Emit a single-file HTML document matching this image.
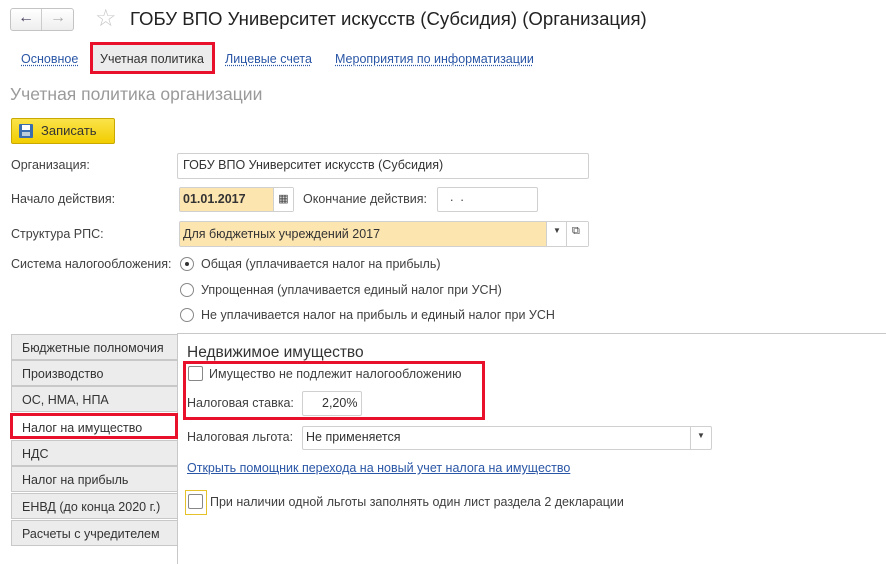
<!DOCTYPE html>
<html><head><meta charset="utf-8"><style>
*{box-sizing:border-box;margin:0;padding:0}
body{width:886px;height:564px;background:#fff;font-family:"Liberation Sans",Arial,sans-serif;font-size:12.5px;color:#404040;position:relative;overflow:hidden}
.a{position:absolute;white-space:nowrap}
.inp{position:absolute;border:1px solid #d0d0d0;border-radius:2px;background:#fff}
.lnk{color:#2a56a6;text-decoration:underline dotted;text-underline-offset:2px}
.tab{position:absolute;left:11px;width:166px;height:26px;background:#ececec;border:1px solid #c8c8c8;border-right:none;padding:6px 0 0 10px;color:#333}
.rad{position:absolute;width:14px;height:14px;border:1px solid #888;border-radius:50%;background:#fff}
</style></head><body>
<div class="a" style="left:10px;top:8px;width:64px;height:23px;border:1px solid #c4c4c4;border-radius:3px;background:linear-gradient(#fff,#eee)"></div>
<div class="a" style="left:41px;top:9px;width:1px;height:21px;background:#ccc"></div>
<div class="a" style="left:18px;top:9px;font-size:16px;color:#4a4060;font-weight:bold">&#8592;</div>
<div class="a" style="left:50px;top:9px;font-size:16px;color:#aaa;font-weight:bold">&#8594;</div>
<div class="a" style="left:95px;top:4px;font-size:24px;color:#c8c8c8">&#9734;</div>
<div class="a" style="left:130px;top:8px;font-size:18.6px;color:#222">ГОБУ ВПО Университет искусств (Субсидия) (Организация)</div>

<div class="a lnk" style="left:21px;top:52px">Основное</div>
<div class="a" style="left:90px;top:42px;width:125px;height:32px;border:3px solid #e8102a;background:#ececec"></div>
<div class="a" style="left:100px;top:52px;color:#333">Учетная политика</div>
<div class="a lnk" style="left:225px;top:52px">Лицевые счета</div>
<div class="a lnk" style="left:335px;top:52px">Мероприятия по информатизации</div>

<div class="a" style="left:10px;top:84px;font-size:17.5px;color:#9a9a9a">Учетная политика организации</div>

<div class="a" style="left:11px;top:118px;width:104px;height:26px;border:1px solid #c9a800;border-radius:2px;background:linear-gradient(#fbe34a,#f1cd00)"></div>
<div class="a" style="left:19px;top:124px;width:14px;height:14px;background:#3a6db0;border-radius:1px"><div style="margin:1px 3px;width:8px;height:5px;background:#fff"></div><div style="margin:2px 3px;width:8px;height:4px;background:#bcd"></div></div>
<div class="a" style="left:41px;top:123px;color:#333;font-size:13px">Записать</div>

<div class="a" style="left:11px;top:158px">Организация:</div>
<div class="inp" style="left:177px;top:153px;width:412px;height:26px"></div>
<div class="a" style="left:183px;top:158px;color:#333">ГОБУ ВПО Университет искусств (Субсидия)</div>

<div class="a" style="left:11px;top:192px">Начало действия:</div>
<div class="inp" style="left:179px;top:187px;width:115px;height:25px;background:#fde5b0"></div>
<div class="a" style="left:273px;top:188px;width:20px;height:23px;background:#fff;border-left:1px solid #d0d0d0;text-align:center;font-size:11px;padding-top:4px">&#9638;</div>
<div class="a" style="left:183px;top:192px;font-weight:bold;color:#333">01.01.2017</div>
<div class="a" style="left:303px;top:192px">Окончание действия:</div>
<div class="inp" style="left:437px;top:187px;width:101px;height:25px"></div>
<div class="a" style="left:450px;top:190px">.&nbsp;&nbsp;.</div>

<div class="a" style="left:11px;top:227px">Структура РПС:</div>
<div class="inp" style="left:179px;top:221px;width:410px;height:26px;background:#fde5b0"></div>
<div class="a" style="left:546px;top:222px;width:42px;height:24px;background:#fff;border-left:1px solid #d0d0d0"></div>
<div class="a" style="left:566px;top:222px;width:1px;height:24px;background:#d0d0d0"></div>
<div class="a" style="left:553px;top:226px;font-size:8px">&#9660;</div>
<div class="a" style="left:572px;top:225px;font-size:11px">&#10697;</div>
<div class="a" style="left:183px;top:227px;color:#333">Для бюджетных учреждений 2017</div>

<div class="a" style="left:11px;top:257px">Система налогообложения:</div>
<div class="rad" style="left:180px;top:257px"><div style="margin:4px;width:4px;height:4px;border-radius:50%;background:#333"></div></div>
<div class="a" style="left:201px;top:257px">Общая (уплачивается налог на прибыль)</div>
<div class="rad" style="left:180px;top:283px"></div>
<div class="a" style="left:201px;top:283px">Упрощенная (уплачивается единый налог при УСН)</div>
<div class="rad" style="left:180px;top:308px"></div>
<div class="a" style="left:201px;top:308px">Не уплачивается налог на прибыль и единый налог при УСН</div>

<div class="a" style="left:177px;top:333px;width:709px;height:1px;background:#c8c8c8"></div>
<div class="a" style="left:177px;top:333px;width:1px;height:231px;background:#c8c8c8"></div>
<div class="tab" style="top:334px">Бюджетные полномочия</div>
<div class="tab" style="top:360px">Производство</div>
<div class="tab" style="top:386px">ОС, НМА, НПА</div>
<div class="a" style="left:10px;top:413px;width:168px;height:26px;border:3px solid #e8102a;background:#fff;padding:5px 0 0 9px;color:#333">Налог на имущество</div>
<div class="tab" style="top:440px">НДС</div>
<div class="tab" style="top:466px">Налог на прибыль</div>
<div class="tab" style="top:493px">ЕНВД (до конца 2020 г.)</div>
<div class="tab" style="top:520px">Расчеты с учредителем</div>

<div class="a" style="left:187px;top:344px;font-size:15.5px;color:#333">Недвижимое имущество</div>
<div class="a" style="left:183px;top:361px;width:302px;height:59px;border:3px solid #e8102a"></div>
<div class="a" style="left:188px;top:366px;width:15px;height:15px;border:1px solid #888;border-radius:2px"></div>
<div class="a" style="left:209px;top:367px">Имущество не подлежит налогообложению</div>
<div class="a" style="left:187px;top:396px">Налоговая ставка:</div>
<div class="inp" style="left:302px;top:391px;width:60px;height:25px"></div>
<div class="a" style="left:322px;top:396px;color:#333">2,20%</div>

<div class="a" style="left:187px;top:430px">Налоговая льгота:</div>
<div class="inp" style="left:302px;top:426px;width:410px;height:24px"></div>
<div class="a" style="left:690px;top:427px;width:1px;height:22px;background:#d0d0d0"></div>
<div class="a" style="left:697px;top:431px;font-size:8px">&#9660;</div>
<div class="a" style="left:306px;top:430px;color:#333">Не применяется</div>

<div class="a" style="left:187px;top:461px;color:#2a56a6;text-decoration:underline">Открыть помощник перехода на новый учет налога на имущество</div>

<div class="a" style="left:185px;top:490px;width:22px;height:25px;border:1px solid #e6c22a"></div>
<div class="a" style="left:188px;top:494px;width:15px;height:15px;border:1px solid #888;border-radius:2px"></div>
<div class="a" style="left:210px;top:495px">При наличии одной льготы заполнять один лист раздела 2 декларации</div>
</body></html>
